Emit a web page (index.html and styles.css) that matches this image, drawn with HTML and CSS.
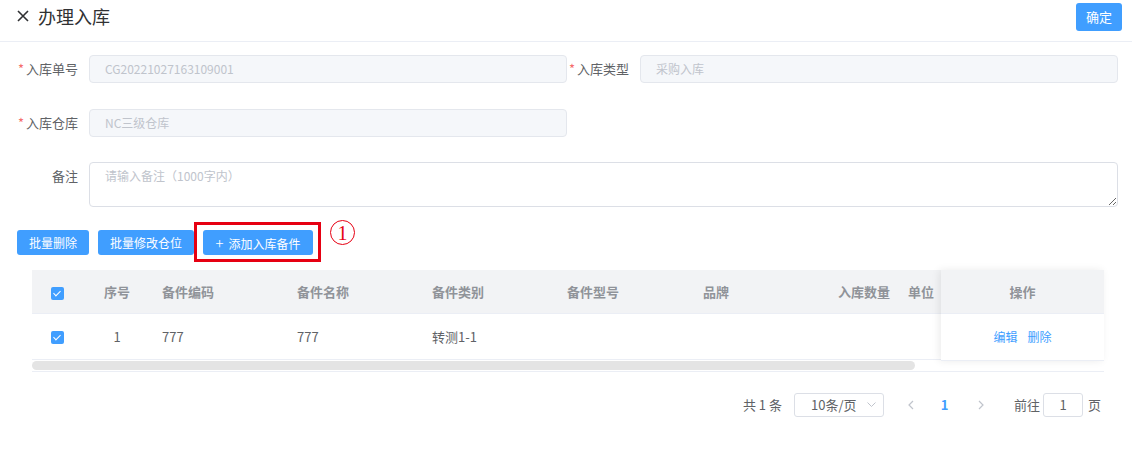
FILE: index.html
```html
<!DOCTYPE html>
<html lang="zh-CN">
<head>
<meta charset="UTF-8">
<meta name="viewport" content="width=device-width, initial-scale=1.0">
<link rel="stylesheet" href="styles.css">
<title>办理入库</title>
</head>
<body>
<div class="topbar">
  <div class="title">
    <svg class="close" width="12" height="12" viewBox="0 0 12 12"><path d="M1 1L11 11M11 1L1 11" stroke="#303133" stroke-width="1.6" fill="none"/></svg>
    <span>办理入库</span>
  </div>
  <button class="btn btn-ok">确定</button>
</div>

<div class="form">
  <div class="form-row">
    <div class="item">
      <label class="label req">入库单号</label>
      <div class="input disabled">CG20221027163109001</div>
    </div>
    <div class="item">
      <label class="label req">入库类型</label>
      <div class="input disabled">采购入库</div>
    </div>
  </div>
  <div class="form-row row-2">
    <div class="item">
      <label class="label req">入库仓库</label>
      <div class="input disabled">NC三级仓库</div>
    </div>
  </div>
  <div class="item full">
    <label class="label">备注</label>
    <textarea class="textarea" placeholder="请输入备注（1000字内）"></textarea>
  </div>
</div>

<div class="toolbar">
  <button class="btn btn-small first">批量删除</button>
  <button class="btn btn-small">批量修改仓位</button>
  <div class="mark-box">
    <button class="btn btn-small btn-add"><span class="plus">+</span>添加入库备件</button>
  </div>
  <span class="mark-num">1</span>
</div>

<div class="table-wrap">
  <div class="table-scroll">
    <table class="table">
      <thead>
        <tr>
          <th class="c-check center"><span class="check"></span></th>
          <th class="c-index center">序号</th>
          <th class="c-wide">备件编码</th>
          <th class="c-wide">备件名称</th>
          <th class="c-wide">备件类别</th>
          <th class="c-wide c-model">备件型号</th>
          <th class="c-wide">品牌</th>
          <th class="c-narrow">入库数量</th>
          <th class="c-narrow">单位</th>
          <th class="c-rest"></th>
          <th class="c-op"></th>
        </tr>
      </thead>
      <tbody>
        <tr>
          <td class="center"><span class="check"></span></td>
          <td class="center">1</td>
          <td>777</td>
          <td>777</td>
          <td>转测1-1</td>
          <td></td>
          <td></td>
          <td></td>
          <td></td>
          <td></td>
          <td></td>
        </tr>
      </tbody>
    </table>
    <div class="scrollbar"><div class="thumb"></div></div>
  </div>
  <div class="fixed-right">
    <div class="fixed-head">操作</div>
    <div class="fixed-cell"><a class="link">编辑</a><a class="link">删除</a></div>
  </div>
</div>

<div class="pager">
  <span class="total">共 1 条</span>
  <div class="select">
    <span>10条/页</span>
    <svg width="9" height="5" viewBox="0 0 9 5"><path d="M0.5 0.5L4.5 4.5L8.5 0.5" stroke="#c0c4cc" stroke-width="1" fill="none"/></svg>
  </div>
  <span class="arrow prev">
    <svg width="6" height="10" viewBox="0 0 6 10"><path d="M5 1L1 5L5 9" stroke="#c0c4cc" stroke-width="1.2" fill="none"/></svg>
  </span>
  <span class="page-num">1</span>
  <span class="arrow next">
    <svg width="6" height="10" viewBox="0 0 6 10"><path d="M1 1L5 5L1 9" stroke="#c0c4cc" stroke-width="1.2" fill="none"/></svg>
  </span>
  <span class="jump">前往</span>
  <div class="jump-input">1</div>
  <span class="jump-end">页</span>
</div>
</body>
</html>
```

FILE: styles.css
```css
body {
  margin: 0;
  padding: 0;
  background-color: #ffffff;
  font-family: "Noto Sans CJK SC", "Liberation Sans", sans-serif;
  color: #606266;
}
.topbar {
  display: flex;
  justify-content: space-between;
  align-items: center;
  height: 28px;
  padding: 3px 10px 10px 17px;
  border-bottom: 1px solid #ebeef5;
}
.title {
  display: flex;
  align-items: center;
  font-size: 18px;
  color: #303133;
  line-height: 24px;
  margin-top: -2px;
}
.close {
  margin-right: 9px;
}
.btn {
  border: none;
  background-color: #409eff;
  color: #ffffff;
  border-radius: 3px;
  font-family: inherit;
  cursor: pointer;
  padding: 0;
}
.btn-ok {
  width: 46px;
  height: 28px;
  font-size: 13px;
  line-height: 28px;
}
.form {
  padding: 13px 14px 0 17px;
}
.form-row {
  display: grid;
  grid-template-columns: 550px 551px;
  margin-bottom: 26px;
}
.form-row.row-2 {
  margin-bottom: 25px;
}
.item {
  display: flex;
  align-items: flex-start;
}
.label {
  width: 61px;
  flex: none;
  padding-right: 11px;
  text-align: right;
  font-size: 13px;
  line-height: 28px;
  color: #606266;
}
.form-row .item:nth-child(2) .label {
  width: 62px;
}
.req::before {
  content: "*";
  color: #f56c6c;
  margin-right: 2px;
}
.input {
  flex: 1;
  height: 26px;
  border: 1px solid #e4e7ed;
  border-radius: 4px;
  padding: 0 15px;
  font-size: 12px;
  line-height: 26px;
}
.input.disabled {
  background-color: #f5f7fa;
  color: #c0c4cc;
}
.textarea {
  flex: 1;
  height: 45px;
  box-sizing: border-box;
  border: 1px solid #dcdfe6;
  border-radius: 4px;
  padding: 4px 15px;
  font-family: inherit;
  font-size: 12px;
  line-height: 18px;
  color: #606266;
  resize: vertical;
  margin: 0;
}
.textarea::placeholder {
  color: #c0c4cc;
}
.toolbar {
  display: flex;
  align-items: center;
  padding: 15px 0 0 17px;
  height: 40px;
}
.btn-small {
  height: 25px;
  padding: 0 12px;
  font-size: 12px;
  line-height: 25px;
}
.btn-small.first {
  margin-right: 9px;
}
.mark-box {
  display: flex;
  border: 3px solid #e60012;
  padding: 5px 5px 4px 6px;
}
.btn-add {
  width: 110px;
  padding: 0;
}
.plus {
  font-size: 15px;
  margin-right: 5px;
  font-weight: 300;
}
.mark-num {
  align-self: flex-start;
  margin: -2px 0 0 9px;
  width: 23px;
  height: 23px;
  border: 1.5px solid #e60012;
  border-radius: 50%;
  color: #e60012;
  font-family: "Liberation Serif", serif;
  font-size: 20px;
  line-height: 24px;
  text-align: center;
}
.table-wrap {
  position: relative;
  margin: 8px 28px 0 32px;
  border-bottom: 1px solid #ebeef5;
}
.table-scroll {
  overflow: hidden;
}
.table {
  width: 1219px;
  table-layout: fixed;
  border-collapse: collapse;
  font-size: 13px;
}
.table th,
.table td {
  box-sizing: border-box;
  padding: 0 10px;
  border-bottom: 1px solid #ebeef5;
  text-align: left;
  white-space: nowrap;
}
.table th {
  background-color: #f2f3f5;
  color: #909399;
  font-weight: bold;
  height: 43px;
}
.table td {
  height: 46px;
  color: #606266;
}
.c-check { width: 50px; }
.c-index { width: 70px; }
.c-wide { width: 135px; }
.c-model { width: 136px; }
.c-narrow { width: 70px; }
.c-rest { width: 120px; }
.c-op { width: 163px; }
.table .center {
  text-align: center;
}
.check {
  display: inline-block;
  width: 13px;
  height: 13px;
  border-radius: 2px;
  background-color: #409eff;
  position: relative;
  vertical-align: middle;
}
.check::after {
  content: "";
  position: absolute;
  left: 4px;
  top: 2px;
  width: 3px;
  height: 6px;
  border: solid #ffffff;
  border-width: 0 1px 1px 0;
  transform: rotate(45deg);
}
.scrollbar {
  height: 10px;
  padding-top: 1px;
}
.thumb {
  width: 883px;
  height: 9px;
  border-radius: 5px;
  background-color: #e4e4e4;
}
.fixed-right {
  position: absolute;
  top: 0;
  right: 0;
  width: 163px;
  background-color: #ffffff;
  box-shadow: -2px 0 8px rgba(0, 0, 0, 0.08);
  font-size: 13px;
}
.fixed-head {
  height: 43px;
  line-height: 43px;
  background-color: #f2f3f5;
  color: #909399;
  font-weight: bold;
  text-align: center;
  border-bottom: 1px solid #ebeef5;
}
.fixed-cell {
  height: 46px;
  line-height: 46px;
  text-align: center;
  font-size: 12px;
  border-bottom: 1px solid #ebeef5;
}
.link {
  color: #409eff;
  margin: 0 5px;
}
.pager {
  display: flex;
  justify-content: flex-end;
  align-items: center;
  height: 28px;
  margin: 19px 31px 0 0;
  font-size: 13px;
  color: #606266;
}
.total {
  margin-right: 12px;
}
.select {
  display: flex;
  justify-content: space-between;
  align-items: center;
  width: 90px;
  height: 24px;
  box-sizing: border-box;
  border: 1px solid #dcdfe6;
  border-radius: 3px;
  padding: 0 7px 0 16px;
  font-size: 13px;
}
.arrow {
  display: flex;
  justify-content: center;
  align-items: center;
  height: 28px;
}
.arrow.prev {
  width: 34px;
  margin-left: 10px;
}
.arrow.next {
  width: 40px;
}
.page-num {
  width: 33px;
  text-align: center;
  color: #409eff;
  font-weight: bold;
}
.jump {
  margin-left: 13px;
}
.jump-input {
  width: 40px;
  height: 24px;
  box-sizing: border-box;
  border: 1px solid #dcdfe6;
  border-radius: 3px;
  margin: 0 5px 0 3px;
  text-align: center;
  line-height: 22px;
}
```
